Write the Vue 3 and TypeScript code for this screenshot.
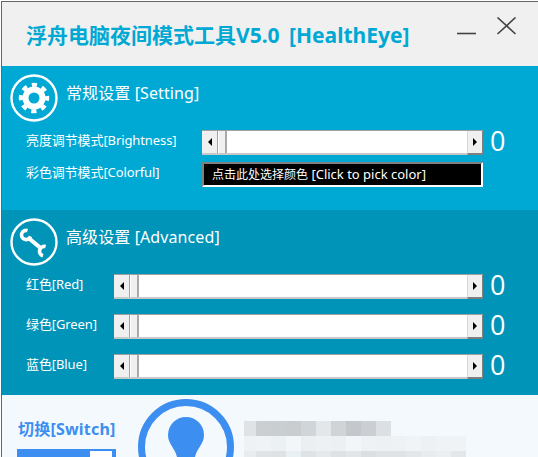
<script setup lang="ts">
interface Row { label: string }
const advanced: Row[] = [{ label: '红色[Red]' }, { label: '绿色[Green]' }, { label: '蓝色[Blue]' }]
const r1 = ['#e0e3e5','#cbcfd2','#c9ced1','#c9cdcf','#d0d5d9','#e4e7e9','#d0d4d7','#c4c8cc','#cbcfd3','#dce0e3','transparent','transparent','transparent','transparent','transparent']
const r2 = ['#eff2f5','#eff3f6','#ecf1f4','#f2f6f9','#ebeff2','#eef1f4','#ecf0f3','#f3f6f9','#eef2f5','#edf1f4','#eef2f5','#f0f4f6','#edf1f4','#eff3f6','#eff3f6']
const r3 = ['#e8ecef','#e0e3e5','#dfe2e3','#e8f0f3','#e0e3e6','#e6e9ec','#dfe2e5','#e3e6e9','#dbdfe1','#dfe3e5','#dfe3e5','#e3e7e9','#e8ecee','#ebeff1','#e3e7ea']
const mosaic = [...r1, ...r2, ...r3]
</script>

<template>
  <div class="window">
    <div class="inner">
      <header class="titlebar">
        <h1 class="title">浮舟电脑夜间模式工具V5.0 [HealthEye]</h1>
        <svg class="controls" width="60" height="18" viewBox="0 0 60 18">
          <path d="M0 16.5H19" stroke="#444" stroke-width="1.6" fill="none" />
          <path d="M40.5 0.5L58.5 17M58.5 0.5L40.5 17" stroke="#444" stroke-width="1.6" fill="none" />
        </svg>
      </header>

      <section class="panel general">
        <div class="head">
          <svg class="icon" width="48" height="48" viewBox="0 0 48 48">
            <circle cx="24" cy="24" r="22.5" fill="none" stroke="#fff" stroke-width="2.4" />
            <circle cx="24" cy="24" r="8.5" fill="none" stroke="#fff" stroke-width="6" />
            <circle cx="24" cy="24" r="13.2" fill="none" stroke="#fff" stroke-width="4" stroke-dasharray="5.2 5.17" stroke-dashoffset="2.6" />
          </svg>
          <h2 class="head-title">常规设置 [Setting]</h2>
        </div>
        <div class="rows-general">
          <div class="row">
            <span class="label label-wide">亮度调节模式[Brightness]</span>
            <div class="slider slider-short">
              <span class="btn"><i class="arrow-left"></i></span>
              <span class="thumb"></span>
              <span class="track"></span>
              <span class="btn btn-right"><i class="arrow-right"></i></span>
            </div>
            <span class="value">0</span>
          </div>
          <div class="row">
            <span class="label label-wide">彩色调节模式[Colorful]</span>
            <div class="picker"><span class="picker-cjk">点击此处选择颜色</span> [Click to pick color]</div>
          </div>
        </div>
      </section>

      <section class="panel advanced">
        <div class="head">
          <svg class="icon" width="48" height="48" viewBox="0 0 48 48">
            <circle cx="24" cy="24" r="22.5" fill="none" stroke="#fff" stroke-width="2.4" />
            <path d="M17.5 12.6A4.6 4.6 0 1 0 20.4 18.4" stroke="#fff" stroke-width="3.6" fill="none" />
            <path d="M18.5 20L30 29.5" stroke="#fff" stroke-width="4.2" fill="none" />
            <path d="M35.6 28.6A4.6 4.6 0 1 0 33 37.8" stroke="#fff" stroke-width="3.6" fill="none" />
          </svg>
          <h2 class="head-title">高级设置 [Advanced]</h2>
        </div>
        <div class="rows-advanced">
          <div v-for="row in advanced" :key="row.label" class="row">
            <span class="label label-narrow">{{ row.label }}</span>
            <div class="slider slider-long">
              <span class="btn"><i class="arrow-left"></i></span>
              <span class="thumb"></span>
              <span class="track"></span>
              <span class="btn btn-right"><i class="arrow-right"></i></span>
            </div>
            <span class="value">0</span>
          </div>
        </div>
      </section>

      <footer class="foot">
        <div class="switch">
          <div class="switch-title">切换[Switch]</div>
          <div class="toggle"><span class="toggle-knob"></span></div>
        </div>
        <svg class="bulb" width="96" height="58" viewBox="0 0 96 58">
          <circle cx="48" cy="48" r="44.5" fill="none" stroke="#3c8ef0" stroke-width="7" />
          <path d="M48 18a18 18 0 0 1 18 18c0 9-7 13-9 22H39c-2-9-9-13-9-22a18 18 0 0 1 18-18z" fill="#3c8ef0" />
        </svg>
        <div class="mosaic">
          <span v-for="(c, i) in mosaic" :key="i" :style="{ background: c }"></span>
        </div>
      </footer>
    </div>
  </div>
</template>

<style scoped>
.window {
  width: 538px;
  height: 457px;
  box-sizing: border-box;
  padding: 1px 0 0 1px;
  background: #fff;
  overflow: hidden;
  font-family: "Noto Sans", "Noto Sans CJK SC", sans-serif;
}
.inner {
  height: 456px;
  box-sizing: border-box;
  border-top: 1px solid #666;
  border-left: 1px solid #666;
  display: flex;
  flex-direction: column;
  overflow: hidden;
}
.titlebar {
  height: 64px;
  flex: none;
  display: flex;
  align-items: center;
  background: #f0f0f0;
  padding-left: 24px;
}
.title {
  margin: 0;
  font-size: 21px;
  font-weight: 700;
  word-spacing: 4px;
  color: #00a8d4;
  white-space: nowrap;
}
.controls {
  margin-left: auto;
  margin-right: 21px;
  align-self: flex-start;
  margin-top: 15px;
}
.panel {
  color: #fff;
  padding-top: 8px;
  flex: none;
}
.general {
  background: #00a8d4;
  height: 144px;
  box-sizing: border-box;
}
.advanced {
  background: #0094b8;
  height: 185px;
  box-sizing: border-box;
}
.head {
  display: flex;
  align-items: center;
  padding-left: 8px;
  height: 48px;
}
.icon {
  flex: none;
}
.head-title {
  margin: 0 0 12px 8px;
  font-size: 16px;
  font-weight: 400;
  letter-spacing: 0.1px;
  white-space: nowrap;
}
.rows-general {
  display: flex;
  flex-direction: column;
  gap: 7px;
  margin-top: 8px;
}
.rows-advanced {
  display: flex;
  flex-direction: column;
  gap: 15px;
  margin-top: 8px;
}
.row {
  display: flex;
  align-items: center;
  height: 25px;
  padding-left: 24px;
}
.label {
  font-size: 13px;
  letter-spacing: -0.1px;
  flex: none;
  margin-bottom: 6px;
  white-space: nowrap;
}
.label-wide {
  width: 176px;
}
.label-narrow {
  width: 88px;
}
.slider {
  height: 25px;
  box-sizing: border-box;
  display: flex;
  flex: none;
  background: #fff;
  border-top: 1px solid #a0a0a0;
  border-bottom: 2px solid #c8c8c8;
}
.slider-short {
  width: 281px;
}
.slider-long {
  width: 369px;
}
.btn {
  width: 16px;
  flex: none;
  box-sizing: border-box;
  background: #f0f0f0;
  border-right: 1px solid #a0a0a0;
  display: flex;
  align-items: center;
  justify-content: center;
}
.btn-right {
  border-right: 1px solid #808080;
  border-left: 1px solid #d8d8d8;
  margin-bottom: -2px;
  border-bottom: 2px solid #808080;
}
.thumb {
  width: 8px;
  flex: none;
  margin-left: 1px;
  box-sizing: border-box;
  background: #f0f0f0;
  border-right: 2px solid #a8a8a8;
}
.track {
  flex: 1;
}
.arrow-left,
.arrow-right {
  width: 0;
  height: 0;
  border-top: 4px solid transparent;
  border-bottom: 4px solid transparent;
}
.arrow-left {
  border-right: 4px solid #000;
}
.arrow-right {
  border-left: 4px solid #000;
}
.value {
  margin-left: 7px;
  margin-bottom: 4px;
  font-family: "Open Sans", sans-serif;
  font-weight: 400;
  font-size: 27px;
  line-height: 25px;
}
.picker {
  width: 281px;
  height: 25px;
  box-sizing: border-box;
  flex: none;
  background: #000;
  color: #fff;
  border-style: solid;
  border-width: 2px;
  border-color: #808080 #fff #fff #808080;
  font-size: 13px;
  line-height: 21px;
  padding-left: 8px;
  white-space: nowrap;
}
.picker-cjk {
  font-size: 12px;
}
.foot {
  flex: 1;
  display: flex;
  align-items: flex-start;
  background: #f3f9fd;
  overflow: hidden;
}
.switch {
  flex: none;
  width: 99px;
  margin-left: 15px;
  padding-top: 23px;
}
.switch-title {
  font-size: 16px;
  font-weight: 700;
  line-height: 22px;
  letter-spacing: 0.2px;
  color: #3c8ef0;
  margin-left: 1px;
  white-space: nowrap;
}
.toggle {
  margin-top: 9px;
  height: 20px;
  background: #3c8ef0;
  padding: 2px 4px 0 0;
  display: flex;
  justify-content: flex-end;
}
.toggle-knob {
  width: 22px;
  height: 18px;
  background: #fff;
}
.bulb {
  flex: none;
  margin: 4px 0 0 22px;
}
.mosaic {
  flex: none;
  margin: 26px 0 0 10px;
  display: grid;
  grid-template-columns: 12px repeat(14, 15px);
  grid-template-rows: 15px 15px 6px;
}
</style>
